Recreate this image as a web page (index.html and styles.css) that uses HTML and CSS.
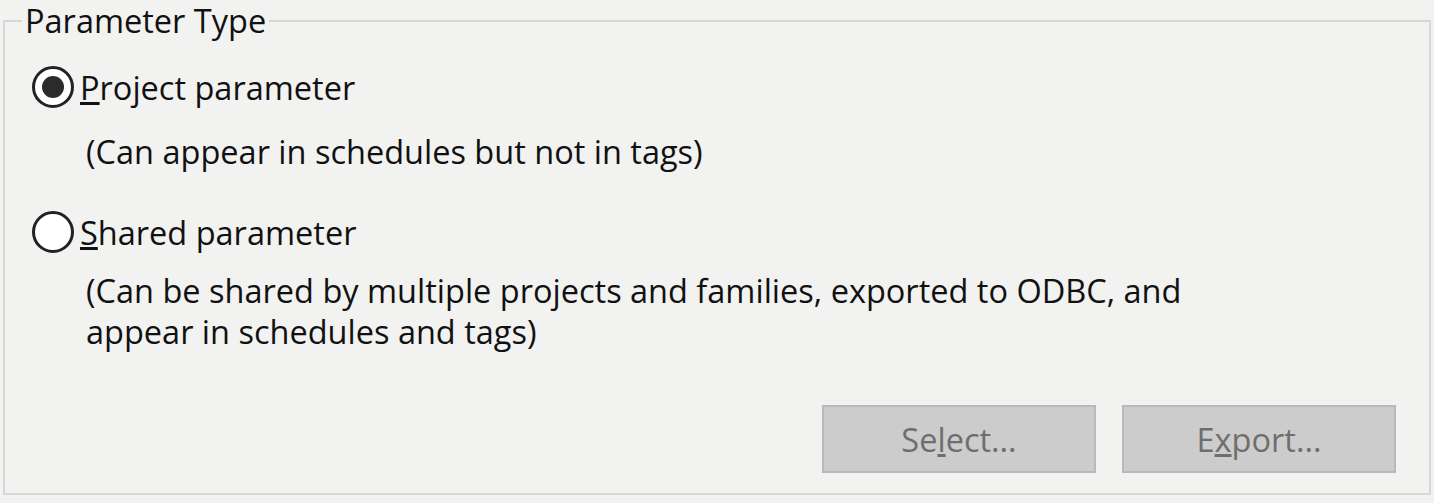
FILE: index.html
```html
<!DOCTYPE html>
<html lang="en">
<head>
    <meta charset="UTF-8">
    <meta name="viewport" content="width=device-width, initial-scale=1.0">
    <title>Parameter Type</title>
    <link rel="stylesheet" href="styles.css">
</head>
<body>
    <fieldset class="group">
        <legend>Parameter Type</legend>

        <label class="option">
            <span class="radio checked"></span>
            <span><u>P</u>roject parameter</span>
        </label>
        <p class="note first">(Can appear in schedules but not in tags)</p>

        <label class="option">
            <span class="radio"></span>
            <span><u>S</u>hared parameter</span>
        </label>
        <p class="note second">(Can be shared by multiple projects and families, exported to ODBC, and<br>appear in schedules and tags)</p>

        <div class="buttons">
            <button disabled>Se<u>l</u>ect...</button>
            <button disabled>E<u>x</u>port...</button>
        </div>
    </fieldset>
</body>
</html>
```

FILE: styles.css
```css
body {
    margin: 0;
    background: #f2f2f1;
    font-family: 'Open Sans', 'Noto Sans', sans-serif;
    font-size: 32.5px;
    color: #111;
}

.group {
    margin: 3px 3px 0 3px;
    height: 492px;
    box-sizing: border-box;
    border: 2px solid #d7d7d7;
    padding: 0 33px 0 27px;
    display: flex;
    flex-direction: column;
}

.group legend {
    padding: 0 3px;
    margin-left: -10px;
    line-height: 36px;
}

.option {
    display: flex;
    align-items: center;
    gap: 6px;
    margin-top: 26px;
    height: 44px;
}

.note + .option {
    margin-top: 0;
}

.note {
    margin: 0;
    padding-left: 54px;
    line-height: 41px;
}

.note.first {
    margin-top: 22px;
    margin-bottom: 38px;
}

.note.second {
    margin-top: 16px;
}

.radio {
    width: 36px;
    height: 36px;
    border: 3px solid #222;
    border-radius: 50%;
    background: #fff;
    position: relative;
    flex: none;
}

.radio.checked::after {
    content: "";
    position: absolute;
    left: 7px;
    top: 7px;
    width: 22px;
    height: 22px;
    border-radius: 50%;
    background: #2b2b2b;
}

.buttons {
    margin-top: auto;
    margin-bottom: 20px;
    display: flex;
    justify-content: flex-end;
    gap: 26px;
}

.buttons button {
    width: 274px;
    height: 68px;
    background: #cccccc;
    border: 2px solid #b9b9b9;
    font: inherit;
    color: #6e6e6e;
}
```
